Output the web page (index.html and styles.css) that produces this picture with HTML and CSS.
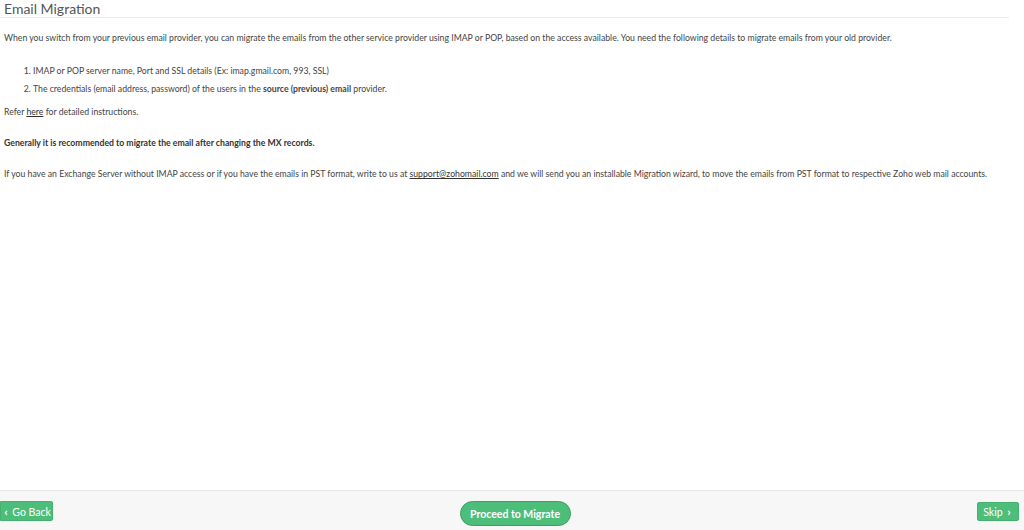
FILE: index.html
```html
<!DOCTYPE html>
<html>
<head>
<meta charset="utf-8">
<link rel="stylesheet" href="styles.css">
</head>
<body>
<div class="page">
  <main class="content">
    <h1 class="title">Email Migration</h1>
    <p class="para first">When you switch from your previous email provider, you can migrate the emails from the other service provider using IMAP or POP, based on the access available. You need the following details to migrate emails from your old provider.</p>
    <ol class="steps">
      <li>IMAP or POP server name, Port and SSL details (Ex: imap.gmail.com, 993, SSL)</li>
      <li>The credentials (email address, password) of the users in the <b>source (previous) email</b> provider.</li>
    </ol>
    <p class="para">Refer <a class="link" href="#">here</a> for detailed instructions.</p>
    <p class="para strong">Generally it is recommended to migrate the email after changing the MX records.</p>
    <p class="para">If you have an Exchange Server without IMAP access or if you have the emails in PST format, write to us at <a class="link" href="#">support@zohomail.com</a> and we will send you an installable Migration wizard, to move the emails from PST format to respective Zoho web mail accounts.</p>
  </main>
  <footer class="footer">
    <button class="btn btn-back"><span class="chev">&lsaquo;</span> Go Back</button>
    <button class="btn btn-proceed">Proceed to Migrate</button>
    <button class="btn btn-skip">Skip <span class="chev">&rsaquo;</span></button>
  </footer>
</div>
</body>
</html>
```
FILE: styles.css
```css
* { box-sizing: border-box; }
html, body { margin: 0; padding: 0; }
body {
  font-family: Lato, "Open Sans", Arial, sans-serif;
  color: #444;
  background: #fff;
}
.page {
  width: 1024px;
  height: 530px;
  display: flex;
  flex-direction: column;
}
.content {
  flex: 1;
  padding: 0 15px 0 4px;
}
.title {
  margin: 0 0 0 -4px;
  font-size: 14px;
  font-weight: 400;
  color: #555;
  line-height: 16px;
  padding: 1px 0 0 4px;
  border-bottom: 1px solid #eaeaea;
}
.para {
  margin: 0;
  font-size: 8.7px;
  line-height: 12px;
}
.para.first { margin-top: 14px; }
.steps {
  margin: 21px 0 0 0;
  padding-left: 29px;
  font-size: 8.7px;
}
.steps li { line-height: 12px; margin-bottom: 6px; }
.steps + .para { margin-top: 11px; }
.para.strong { font-weight: 700; color: #333; margin-top: 19px; }
.para.strong + .para { margin-top: 19px; }
.link { color: #333; text-decoration: underline; }
.footer {
  height: 40px;
  background: #f7f7f7;
  border-top: 1px solid #e6e6e6;
  display: flex;
  align-items: flex-start;
  justify-content: space-between;
  padding: 10px 5px 0 0;
}
.btn {
  font-family: Lato, "Open Sans", Arial, sans-serif;
  background: #4dbd7a;
  color: #fff;
  border: 1px solid #46b070;
  border-radius: 2px;
  font-size: 10.5px;
  height: 20px;
  padding: 0;
  white-space: nowrap;
  cursor: pointer;
}
.btn-back { border-radius: 0 2px 2px 0; width: 53px; }
.btn-skip { width: 42px; margin-top: 1px; height: 19px; }
.btn-proceed {
  height: 25px;
  width: 111px;
  border-radius: 13px;
  border: 1px solid #3e9e64;
  font-size: 10.5px;
  font-weight: 700;
}
.chev { font-size: 12px; font-weight: 700; margin: 0 2px; }
```
